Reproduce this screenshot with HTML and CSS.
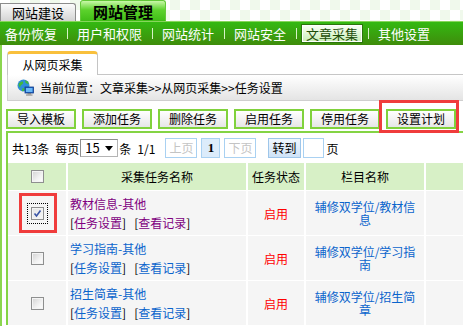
FILE: index.html
```html
<!DOCTYPE html>
<html lang="zh-CN">
<head>
    <meta charset="UTF-8">
    <title>任务设置</title>
    <link rel="stylesheet" href="styles.css">
</head>
<body>
    <div class="topbar">
        <div class="top-tab">网站建设</div>
        <div class="top-tab active">网站管理</div>
    </div>
    <div class="menubar">
        <span class="menu-item">备份恢复</span><span class="sep"></span>
        <span class="menu-item">用户和权限</span><span class="sep"></span>
        <span class="menu-item">网站统计</span><span class="sep"></span>
        <span class="menu-item">网站安全</span><span class="sep"></span>
        <span class="menu-item current">文章采集</span><span class="sep"></span>
        <span class="menu-item">其他设置</span>
    </div>

    <div class="main">
        <div class="subtabs"><span class="subtab">从网页采集</span></div>
        <div class="crumb">
            <svg class="globe" width="17" height="17" viewBox="0 0 17 17">
                <circle cx="6.5" cy="6.5" r="6" fill="#2f8fd8"/>
                <path d="M1.5 5 Q3 2 6 2.5 Q7 4.5 5 5.5 Q3.5 6 3 8.5 Q1.5 7.5 1.5 5z M8 1.2 Q11 1.8 12 4.5 Q10 5.2 8.5 3.8z M5.5 9 Q7.5 8.5 8 10.5 Q7 12.5 5 12.2z" fill="#42b83a"/>
                <rect x="8" y="8" width="8.5" height="6" fill="#1d5fc4" stroke="#123f8a" stroke-width="0.8"/>
                <rect x="9" y="9" width="6.5" height="4" fill="#6ab8f6"/>
                <rect x="10.5" y="14.2" width="3.5" height="1.2" fill="#777"/>
                <rect x="9" y="15.4" width="6.5" height="1.3" fill="#9a9a9a"/>
            </svg>
            当前位置：文章采集&gt;&gt;从网页采集&gt;&gt;任务设置
        </div>

        <div class="toolbar">
            <button class="tool-btn">导入模板</button>
            <button class="tool-btn">添加任务</button>
            <button class="tool-btn">删除任务</button>
            <button class="tool-btn">启用任务</button>
            <button class="tool-btn">停用任务</button>
            <button class="tool-btn">设置计划</button>
            <span class="mark mark-plan"></span>
        </div>

        <div class="list">
            <div class="pager">
                <span>共13条</span>
                <span class="per">每页</span>
                <span class="select">15<i class="arrow"></i></span>
                <span class="unit">条</span>
                <span class="pages">1/1</span>
                <span class="pg-btn off prev">上页</span>
                <span class="pg-btn now">1</span>
                <span class="pg-btn off">下页</span>
                <span class="pg-btn go">转到</span>
                <span class="pg-input"></span>
                <span class="unit">页</span>
            </div>

            <div class="grid">
                <div class="cell head"><span class="cb"></span></div>
                <div class="cell head">采集任务名称</div>
                <div class="cell head">任务状态</div>
                <div class="cell head">栏目名称</div>
                <div class="cell head"></div>

                <div class="cell check">
                    <span class="cb checked">
                        <svg width="11" height="11" viewBox="0 0 11 11"><path d="M2.5 5.5 L4.5 8 L8.5 2.5" fill="none" stroke="#3a55a6" stroke-width="1.6"/></svg>
                    </span>
                    <span class="mark mark-row"></span>
                </div>
                <div class="cell name visited">
                    <a>教材信息-其他</a>
                    <span>[<a>任务设置</a>]<span class="gap">[</span><a>查看记录</a>]</span>
                </div>
                <div class="cell state">启用</div>
                <div class="cell column"><a>辅修双学位/教材信息</a></div>
                <div class="cell"></div>

                <div class="cell check"><span class="cb"></span></div>
                <div class="cell name">
                    <a>学习指南-其他</a>
                    <span>[<a>任务设置</a>]<span class="gap">[</span><a>查看记录</a>]</span>
                </div>
                <div class="cell state">启用</div>
                <div class="cell column"><a>辅修双学位/学习指南</a></div>
                <div class="cell"></div>

                <div class="cell check"><span class="cb"></span></div>
                <div class="cell name">
                    <a>招生简章-其他</a>
                    <span>[<a>任务设置</a>]<span class="gap">[</span><a>查看记录</a>]</span>
                </div>
                <div class="cell state">启用</div>
                <div class="cell column"><a>辅修双学位/招生简章</a></div>
                <div class="cell"></div>
            </div>
        </div>
    </div>
</body>
</html>
```

FILE: styles.css
```css
body {
    margin: 0;
    width: 463px;
    height: 326px;
    overflow: hidden;
    font-family: "Noto Sans CJK SC", "Liberation Sans", sans-serif;
    font-size: 12px;
    color: #000;
    background: #fff;
}

a {
    text-decoration: none;
}

/* top tabs */
.topbar {
    height: 21px;
    display: flex;
    align-items: flex-end;
    gap: 4px;
    background: repeating-conic-gradient(#f0f9ec 0 25%, #fff 0 50%) 0 0 / 20px 20px;
}

.top-tab {
    width: 76px;
    height: 18px;
    box-sizing: border-box;
    border: 1px solid #8c8c8c;
    border-bottom: none;
    border-radius: 0 3px 0 0;
    background: linear-gradient(#fbfbfb, #d4d4d4);
    font-size: 13px;
    line-height: 17px;
    text-align: center;
}

.top-tab.active {
    width: 86px;
    height: 21px;
    border-color: #62c838;
    border-radius: 3px 3px 0 0;
    background: linear-gradient(#c8f7a8, #5cd22c 45%, #40bd17);
    font-size: 15px;
    font-weight: bold;
    line-height: 21px;
}

/* green menu */
.menubar {
    height: 23px;
    border-top: 1px solid #88d65c;
    background: linear-gradient(#33b912, #3f8c0b);
    display: flex;
    align-items: center;
    color: #fff;
    font-size: 13px;
}

.menu-item {
    padding: 0 5px;
    line-height: 17px;
    white-space: nowrap;
}

.menu-item.current {
    padding: 0 4px;
    border: 1px solid #2b760c;
    box-shadow: inset 0 0 0 1px #fff;
    background: linear-gradient(#fbfff8, #c8edb4);
    color: #1c4c08;
}

.sep {
    width: 1px;
    height: 11px;
    background: #d6f3c6;
    margin: 0 4px 0 5px;
}

/* content */
.main {
    height: 281px;
    border-left: 2px solid #8bd64f;
    padding: 6px 0 0 4px;
}

.subtabs {
    display: flex;
    margin-left: 1px;
}

.subtab {
    position: relative;
    z-index: 1;
    width: 89px;
    height: 21px;
    border: 1px solid #c4c4c4;
    border-top: 3px solid #f9c03c;
    border-bottom: none;
    border-radius: 4px 4px 0 0;
    margin-bottom: -1px;
    background: #fff;
    text-align: center;
    line-height: 21px;
}

.crumb {
    margin-left: 1px;
    height: 25px;
    border-top: 1px solid #c6c6c6;
    border-bottom: 1px solid #cfcfcf;
    border-left: 1px solid #d0d0d0;
    background: linear-gradient(#fff, #e4e4e4);
    display: flex;
    align-items: center;
    padding-left: 9px;
}

.globe {
    margin-right: 6px;
}

.toolbar {
    position: relative;
    margin-top: 8px;
    display: flex;
    gap: 6px;
}

.tool-btn {
    width: 70px;
    height: 20px;
    box-sizing: border-box;
    border: 2px solid #80d23c;
    background: linear-gradient(#fff, #e6e6e6);
    font-family: inherit;
    font-size: 12px;
    color: #000;
    padding: 0;
    line-height: 16px;
}

.mark {
    position: absolute;
    box-sizing: border-box;
    border: 3px solid #f03c3c;
}

.mark-plan {
    left: 373px;
    top: -9px;
    width: 80px;
    height: 33px;
}

/* list */
.list {
    margin-top: 2px;
    border-top: 2px solid #84d444;
    border-left: 2px solid #84d444;
}

.pager {
    height: 30px;
    display: flex;
    align-items: center;
    padding-left: 4px;
    white-space: nowrap;
}

.per {
    margin-left: 6px;
}

.select {
    position: relative;
    width: 38px;
    height: 18px;
    box-sizing: border-box;
    margin-left: 1px;
    border: 1px solid #b4b4b4;
    border-top-color: #8e8e8e;
    border-left-color: #8e8e8e;
    padding-left: 4px;
    line-height: 16px;
    font-size: 13px;
}

.arrow {
    position: absolute;
    right: 4px;
    top: 6px;
    border-left: 4px solid transparent;
    border-right: 4px solid transparent;
    border-top: 5px solid #000;
}

.unit {
    margin-left: 1px;
}

.pages {
    margin-left: 6px;
    margin-right: 10px;
}

.pg-btn {
    height: 20px;
    box-sizing: border-box;
    border: 1px solid #a9d1f2;
    background: #fff;
    padding: 0 3px;
    line-height: 18px;
    margin-right: 4px;
}

.pg-btn.off {
    color: #c4c4c4;
    width: 32px;
}

.pg-btn.now {
    width: 19px;
    text-align: center;
    background: #dcecfb;
    font-weight: bold;
    font-family: "Liberation Serif", serif;
    font-size: 13px;
}

.pg-btn.go {
    width: 33px;
    margin-left: 8px;
    margin-right: 2px;
    background: linear-gradient(#f0f7fe, #cfe3f7);
    border-color: #9ec6ea;
}

.pg-input {
    width: 21px;
    height: 20px;
    box-sizing: border-box;
    border: 1px solid #a9d1f2;
    margin-right: 1px;
}

.grid {
    display: grid;
    grid-template-columns: 58px 178px 56px 118px 1fr;
    grid-template-rows: 27px 44px 44px 44px;
    column-gap: 2px;
    row-gap: 1px;
}

.cell {
    position: relative;
    background: #f5f5f5;
}

.cell.head {
    background: #d7f0c6;
    display: flex;
    align-items: center;
    justify-content: center;
}

.check {
    display: flex;
    align-items: center;
    justify-content: center;
}

.cb {
    width: 13px;
    height: 13px;
    box-sizing: border-box;
    border: 1px solid #8e8f8f;
    background: linear-gradient(135deg, #d2d2d2, #f2f2f2 60%, #fff);
    box-shadow: inset 0 0 0 1px #f4f4f4;
    display: flex;
}

.cb.checked {
    background: linear-gradient(135deg, #e4e4e4, #f8f8f8);
    outline: 1px dotted #000;
    outline-offset: 3px;
}

.mark-row {
    left: 11px;
    top: 2px;
    width: 38px;
    height: 40px;
}

.name {
    display: flex;
    flex-direction: column;
    justify-content: center;
    padding-left: 2px;
    line-height: 19px;
}

.name a,
.column a {
    color: #0a64cc;
}

.name.visited a {
    color: #800080;
}

.gap {
    margin-left: 8px;
}

.state {
    display: flex;
    align-items: center;
    justify-content: center;
    color: #ff0000;
}

.column {
    display: flex;
    align-items: center;
    justify-content: center;
    text-align: center;
    padding: 0 6px;
    line-height: 13px;
}
```
